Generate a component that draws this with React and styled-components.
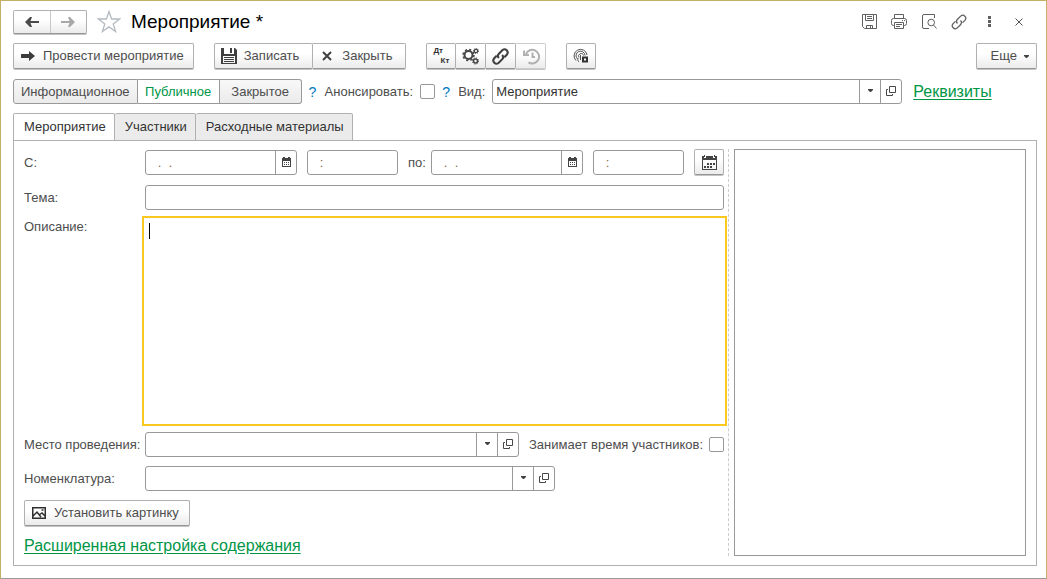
import { useState } from "react"
import styled, { createGlobalStyle, css } from "styled-components"

const tabs = ["Мероприятие", "Участники", "Расходные материалы"]
const accessModes = ["Информационное", "Публичное", "Закрытое"]

export default function App() {
    const [tab, setTab] = useState(tabs[0])
    const [mode, setMode] = useState("Публичное")

    return (
        <>
            <GlobalStyle />
            <Window>
                <Header />
                <CommandBar />
                <Settings>
                    <Segments>
                        {accessModes.map((name) => (
                            <Segment key={name} $active={name === mode} onClick={() => setMode(name)}>
                                {name}
                            </Segment>
                        ))}
                    </Segments>
                    <Help href="#announce-help">?</Help>
                    <label htmlFor="announce">Анонсировать:</label>
                    <CheckBox id="announce" />
                    <Help href="#kind-help">?</Help>
                    <label htmlFor="kind">Вид:</label>
                    <PickerSlot>
                        <Picker id="kind" value="Мероприятие" />
                    </PickerSlot>
                    <DetailsLink href="#details">Реквизиты</DetailsLink>
                </Settings>
                <TabList role="tablist">
                    {tabs.map((name) => (
                        <Tab key={name} role="tab" aria-selected={name === tab} $active={name === tab} onClick={() => setTab(name)}>
                            {name}
                        </Tab>
                    ))}
                </TabList>
                <Panel role="tabpanel">
                    <EventForm />
                    <Splitter />
                    <Preview />
                </Panel>
            </Window>
        </>
    )
}

function Header() {
    return (
        <HeaderBar>
            <NavButtons>
                <NavButton aria-label="Назад">
                    <Icon w={14} h={10} fill="#4a4a4a" d="M0 5 5 0h2L5.500 4H14v2H5.500L7 10H5z" />
                </NavButton>
                <NavButton aria-label="Вперед">
                    <Icon w={14} h={10} fill="#a8a8a8" d="M14 5 9 0H7l1.500 4H0v2h8.500L7 10h2z" />
                </NavButton>
            </NavButtons>
            <IconButton aria-label="В избранное">
                <Icon w={24} h={23} stroke="#b4bbc1" sw={1.3} d="m12 1.500 2.600 7.500h8l-6.400 4.900 2.400 7.600L12 16.900l-6.600 4.600 2.400-7.600L1.400 9h8z" />
            </IconButton>
            <Title>Мероприятие *</Title>
            <WindowTools>
                <IconButton aria-label="Сохранить">
                    <Icon w={15} h={15} stroke="#606060" d="M.5.5h14v14h-12l-2-2zM3.500.5v6h8v-6M5 2.500h5M5 4.500h5M4.500 14.500v-3h6v3M8.500 12v2" />
                </IconButton>
                <IconButton aria-label="Печать">
                    <Icon w={16} h={15} stroke="#606060" d="M3.500 4.500v-4h9v4M3.500 11.500H2.500a2 2 0 0 1-2-2v-3a2 2 0 0 1 2-2h11a2 2 0 0 1 2 2v3a2 2 0 0 1-2 2h-1M3.500 8.500h9v6h-9zM5 10.500h6M5 12.500h4M11 6.500h1M13 6.500h1" />
                </IconButton>
                <IconButton aria-label="Просмотр">
                    <Icon w={15} h={15} stroke="#606060" d="M7 14.500H2A1.500 1.500 0 0 1 .5 13V2A1.500 1.500 0 0 1 2 .5h10.500V4M12.500 8.500a3.300 3.300 0 1 1-6.600 0 3.300 3.300 0 0 1 6.600 0zM11.500 11l3 3.500" />
                </IconButton>
                <IconButton aria-label="Ссылка">
                    <ChainIcon size={16} width={1.3} color="#606060" />
                </IconButton>
                <IconButton aria-label="Меню">
                    <Icon w={3} h={11} fill="#606060" d="M0 0h3v3H0zM0 4h3v3H0zM0 8h3v3H0z" />
                </IconButton>
                <IconButton aria-label="Закрыть окно">
                    <Icon w={8} h={8} stroke="#505050" d="m.5.5 7 7M7.500.5l-7 7" />
                </IconButton>
            </WindowTools>
        </HeaderBar>
    )
}

function CommandBar() {
    return (
        <Commands>
            <Button $gap={8} $end={9}>
                <Icon w={14} h={10} fill="#3c3c3c" d="M0 3h8V0l6 5-6 5V7H0z" />
                Провести мероприятие
            </Button>
            <ButtonGroup>
                <Button $gap={7} $start={6} $end={13}>
                    <FloppyIcon />
                    Записать
                </Button>
                <Button $gap={10} $start={9} $end={13}>
                    <Icon w={10} h={10} stroke="#404040" sw={2} d="m1 1 8 8M9 1 1 9" />
                    Закрыть
                </Button>
            </ButtonGroup>
            <ButtonGroup>
                <SquareButton aria-label="Проводки">
                    <Postings>
                        <span>Дт</span>
                        <span>Кт</span>
                    </Postings>
                </SquareButton>
                <SquareButton aria-label="Настройки">
                    <GearsIcon />
                </SquareButton>
                <SquareButton aria-label="Связи">
                    <ChainIcon size={17} width={2} color="#404040" />
                </SquareButton>
                <SquareButton disabled aria-label="История">
                    <Icon w={18} h={17} stroke="#b0b0b0" sw={2} d="M4 6a6.800 6.800 0 1 1 2.500 8.300M2 2.500V7h5M10.500 4.500V9H13" />
                </SquareButton>
            </ButtonGroup>
            <SquareButton aria-label="Доступ">
                <FingerprintIcon />
            </SquareButton>
            <MoreButton $gap={7} $start={14} $end={7}>
                Еще
                <Caret />
            </MoreButton>
        </Commands>
    )
}

function EventForm() {
    return (
        <Form onSubmit={(e) => e.preventDefault()}>
            <label htmlFor="from">С:</label>
            <DateRow>
                <DateInput id="from" />
                <TimeInput aria-label="Время начала" defaultValue="   :" />
                <ToLabel htmlFor="to">по:</ToLabel>
                <DateInput id="to" />
                <TimeInput aria-label="Время окончания" defaultValue="   :" />
                <SquareButton type="button" aria-label="Выбрать период">
                    <PeriodIcon />
                </SquareButton>
            </DateRow>

            <label htmlFor="theme">Тема:</label>
            <TextInput id="theme" />

            <TopLabel htmlFor="description">Описание:</TopLabel>
            <Editor>
                <TextArea id="description" />
                <Cursor />
            </Editor>

            <label htmlFor="place">Место проведения:</label>
            <PlaceRow>
                <Picker id="place" />
                <label htmlFor="busy">Занимает время участников:</label>
                <CheckBox id="busy" />
            </PlaceRow>

            <label htmlFor="item">Номенклатура:</label>
            <PickerSlot>
                <Picker id="item" />
            </PickerSlot>

            <FormFooter>
                <Button type="button" $gap={8} $end={10}>
                    <Icon w={14} h={12} stroke="#303030" sw={1.5} d="M.75.75h12.500v10.500H.75zM1 9l4-4 4 5M7 8l3-2 3 3M9.500 3h2" />
                    Установить картинку
                </Button>
                <TextLink href="#content">Расширенная настройка содержания</TextLink>
            </FormFooter>
        </Form>
    )
}

function Picker({ id, value = "" }) {
    return (
        <Field>
            <FieldInput id={id} defaultValue={value} />
            <FieldButton type="button" aria-label="Выбрать из списка">
                <Caret />
            </FieldButton>
            <FieldButton type="button" aria-label="Открыть">
                <Icon w={10} h={10} stroke="#484848" d="M3.500.5h6v6h-6zM2 3.500H.5v6h6V8" />
            </FieldButton>
        </Field>
    )
}

function DateInput({ id }) {
    return (
        <Field>
            <FieldInput id={id} $mask defaultValue="   .  ." />
            <FieldButton type="button" aria-label="Календарь">
                <Icon w={9} h={10} fill="#444" d="M0 1h1V0h2v1h3V0h2v1h1v9H0zM1 4v5h7V4zM2 5h1v1H2zM4 5h1v1H4zM6 5h1v1H6zM2 7h1v1H2zM4 7h1v1H4zM6 7h1v1H6z" />
            </FieldButton>
        </Field>
    )
}

function Icon({ w, h, d, fill = "none", stroke = "none", sw = 1 }) {
    return (
        <svg width={w} height={h} viewBox={`0 0 ${w} ${h}`} aria-hidden="true">
            <path d={d} fill={fill} fillRule="evenodd" stroke={stroke} strokeWidth={sw} />
        </svg>
    )
}

function Caret() {
    return <Icon w={5} h={3} fill="#444" d="M0 0h5v1L3 3H2L0 1z" />
}

function FloppyIcon() {
    return <Icon w={16} h={16} fill="#404040" d="M0 0h3v6h10V0h1l2 2v14H0zM9 0h2v5H9zM2 8v7h12V8zM3 9h10v1H3zM3 11h10v1H3zM3 13h10v1H3z" />
}

function PeriodIcon() {
    return (
        <Icon
            w={15}
            h={15}
            fill="#444"
            d="M0 1h2v2h2V1h7v2h2V1h2v14H0zM1 5v9h13V5zM2 0h1v2H2zM12 0h1v2h-1zM5 8h2v2H5zM8 8h2v2H8zM11 8h2v2h-2zM2 11h2v2H2zM5 11h2v2H5zM8 11h2v2H8z"
        />
    )
}

function ChainIcon({ size, width, color }) {
    return (
        <svg width={size} height={size} viewBox="0 0 16 16" fill="none" stroke={color} strokeWidth={width} aria-hidden="true">
            <path d="M6.500 9.500a3 3 0 0 1 0-4.200l3.400-3.400a3 3 0 0 1 4.200 4.200l-2.500 2.500M9.500 6.500a3 3 0 0 1 0 4.200l-3.400 3.400a3 3 0 0 1-4.200-4.200l2.500-2.500" />
        </svg>
    )
}

function GearsIcon() {
    return (
        <svg width="18" height="17" viewBox="0 0 18 17" fill="none" stroke="#444" aria-hidden="true">
            <circle cx="6.500" cy="7" r="4" strokeWidth="2" />
            <circle cx="6.500" cy="7" r="5.500" strokeWidth="1.500" strokeDasharray="2.160 2.160" />
            <circle cx="14" cy="3" r="1.700" strokeWidth="1.200" />
            <circle cx="14" cy="3" r="2.600" strokeWidth="1" strokeDasharray="1 1.040" />
            <circle cx="13.500" cy="13" r="2" strokeWidth="1.500" />
            <circle cx="13.500" cy="13" r="3.100" strokeWidth="1" strokeDasharray="1.200 1.230" />
        </svg>
    )
}

function FingerprintIcon() {
    return (
        <svg width="16" height="16" viewBox="0 0 16 16" fill="none" stroke="#555" aria-hidden="true">
            <path d="M3 12.500A6.500 6.500 0 1 1 14 7M4.500 11A4.500 4.500 0 1 1 12 7.500M6 14c-1-1-1.500-2-1-4M6 9.500a2.500 2.500 0 1 1 4.500-2M7.500 7v5" />
            <path d="M10 9.500h4v4h-4z" stroke="#333" strokeWidth="2" />
        </svg>
    )
}

function CheckBox({ id }) {
    return <Check id={id} type="checkbox" />
}

const GlobalStyle = createGlobalStyle`
    * {
        box-sizing: border-box;
    }
    body {
        margin: 0;
        background: #ffffff;
    }
    body, button, input, textarea {
        font-family: "Liberation Sans", Arial, sans-serif;
        font-size: 13px;
        line-height: 16px;
        color: #4d4d4d;
    }
    svg {
        display: block;
        flex: none;
    }
    label {
        white-space: nowrap;
    }
`

const Window = styled.main`
    display: flex;
    flex-direction: column;
    min-height: 100vh;
    padding: 8px 9px 12px 12px;
    border: 1px solid #c3b063;
    border-bottom-color: #999999;
`

const raised = css`
    border: 1px solid #b0b0b0;
    border-bottom-color: #969696;
    border-radius: 2px;
    background: linear-gradient(#ffffff 40%, #ebebeb);
    box-shadow: 0 1px 0 #c4c4c4;
`

//header

const HeaderBar = styled.header`
    display: flex;
    align-items: center;
    height: 25px;
    margin-bottom: 9px;
`

const NavButtons = styled.nav`
    ${raised}
    display: flex;
    width: 74px;
    height: 24px;
    margin-right: 10px;
`

const NavButton = styled.button`
    display: flex;
    flex: 1;
    align-items: center;
    justify-content: center;
    padding: 0;
    border: none;
    background: none;
    & + & {
        border-left: 1px solid #c8c8c8;
    }
`

const IconButton = styled.button`
    display: flex;
    align-items: center;
    justify-content: center;
    padding: 0;
    border: none;
    background: none;
`

const Title = styled.h1`
    flex: 1;
    margin: 0 0 0 10px;
    font-size: 19px;
    font-weight: 400;
    line-height: 24px;
    color: #000000;
`

const WindowTools = styled.div`
    display: grid;
    grid-template-columns: repeat(6, 30px);
    margin-right: 3px;
`

//command bar

const Commands = styled.div`
    display: flex;
    gap: 20px;
    margin-bottom: 9px;
`

const Button = styled.button`
    ${raised}
    display: flex;
    align-items: center;
    gap: ${(props) => props.$gap}px;
    height: 26px;
    margin-bottom: 1px;
    padding: 0 ${(props) => props.$end}px 0 ${(props) => props.$start ?? 7}px;
    white-space: nowrap;
    &:disabled {
        border-color: #cccccc;
    }
`

const SquareButton = styled(Button)`
    flex: none;
    justify-content: center;
    width: 30px;
    padding: 0;
`

const ButtonGroup = styled.div`
    display: flex;
    button + button {
        border-left: none;
        border-radius: 0 2px 2px 0;
    }
`

const Postings = styled.span`
    display: grid;
    width: 16px;
    font-size: 8px;
    font-weight: 700;
    line-height: 10px;
    text-align: left;
    color: #333333;
    span:last-child {
        text-align: right;
    }
`

const MoreButton = styled(Button)`
    margin-left: auto;
`

//settings row

const Settings = styled.div`
    display: flex;
    align-items: center;
    gap: 7px;
    margin-bottom: 9px;
`

const Segments = styled.div`
    display: flex;
`

const Segment = styled.button`
    min-width: 82px;
    height: 25px;
    padding: 0 7px;
    border: 1px solid #999999;
    background: ${(props) => (props.$active ? "#ffffff" : "linear-gradient(#f8f8f8, #ebebeb)")};
    color: ${(props) => (props.$active ? "#009646" : "#4d4d4d")};
    & + & {
        border-left: none;
    }
    &:first-child {
        border-radius: 3px 0 0 3px;
    }
    &:last-child {
        border-radius: 0 3px 3px 0;
    }
`

const Help = styled.a`
    width: 9px;
    font-size: 14px;
    color: #0078be;
    text-decoration: none;
`

const Check = styled.input`
    appearance: none;
    flex: none;
    width: 15px;
    height: 15px;
    margin: 0;
    border: 1px solid #999999;
    border-radius: 2px;
    background: #ffffff;
    &:checked {
        background: #4d4d4d;
    }
`

const TextLink = styled.a`
    font-size: 16px;
    line-height: 20px;
    color: #009646;
    text-underline-offset: 2px;
`

const DetailsLink = styled(TextLink)`
    margin-left: 4px;
`

//fields

const Field = styled.div`
    display: flex;
    flex: 1;
    min-width: 0;
    height: 25px;
    border: 1px solid #999999;
    border-radius: 3px;
    background: #ffffff;
`

const FieldInput = styled.input`
    flex: 1;
    min-width: 0;
    padding: 0 3px;
    padding-left: ${(props) => (props.$mask ? "1px" : "3px")};
    border: none;
    outline: none;
    background: none;
    color: ${(props) => (props.$mask ? "#8a6b45" : "#333333")};
`

const FieldButton = styled.button`
    display: flex;
    align-items: center;
    justify-content: center;
    width: 21px;
    padding: 0 0 2px;
    border: none;
    border-left: 1px solid #999999;
    background: none;
`

const PickerSlot = styled.div`
    display: flex;
    flex: 0 1 410px;
    max-width: 410px;
    min-width: 0;
`

const TextInput = styled.input`
    width: 100%;
    height: 25px;
    padding: 0 3px;
    border: 1px solid #999999;
    border-radius: 3px;
    background: #ffffff;
`

const TimeInput = styled(TextInput)`
    flex: none;
    width: 91px;
    padding: 0 1px;
    color: #8a6b45;
`

//tabs

const TabList = styled.div`
    display: flex;
    margin-bottom: -1px;
`

const Tab = styled.button`
    height: 28px;
    padding: 0 8px 0 10px;
    border: 1px solid #b0b0b0;
    border-bottom-color: ${(props) => (props.$active ? "#ffffff" : "#b0b0b0")};
    border-radius: 2px 2px 0 0;
    background: ${(props) => (props.$active ? "#ffffff" : "#ebebeb")};
    color: #333333;
    & + & {
        border-left: none;
    }
`

const Panel = styled.section`
    display: grid;
    flex: 1;
    grid-template-columns: minmax(0, 700fr) 10px minmax(0, 292fr);
    padding: 8px 10px 9px;
    border: 1px solid #b0b0b0;
`

const Splitter = styled.div`
    margin-left: 4px;
    border-left: 1px dashed #cccccc;
`

const Preview = styled.div`
    border: 1px solid #999999;
`

//form

const Form = styled.form`
    display: grid;
    grid-template-columns: 121px minmax(0, 1fr);
    grid-template-rows: auto auto minmax(80px, 1fr) auto auto auto;
    align-items: center;
    gap: 9px 0;
`

const DateRow = styled.div`
    display: flex;
    align-items: center;
    gap: 10px;
`

const ToLabel = styled.label`
    width: 18px;
    margin-right: -5px;
`

const TopLabel = styled.label`
    align-self: start;
`

const Editor = styled.div`
    position: relative;
    align-self: stretch;
    display: flex;
    outline: 2px solid #fac91e;
    outline-offset: 1px;
`

const TextArea = styled.textarea`
    flex: 1;
    padding: 4px;
    border: none;
    outline: none;
    resize: none;
    background: none;
    caret-color: transparent;
`

const Cursor = styled.span`
    position: absolute;
    top: 4px;
    left: 4px;
    width: 1px;
    height: 16px;
    background: #000000;
`

const PlaceRow = styled.div`
    display: flex;
    align-items: center;
    label {
        margin: 0 6px 0 10px;
    }
`

const FormFooter = styled.div`
    grid-column: 1 / -1;
    display: flex;
    flex-direction: column;
    align-items: flex-start;
    gap: 9px;
`
